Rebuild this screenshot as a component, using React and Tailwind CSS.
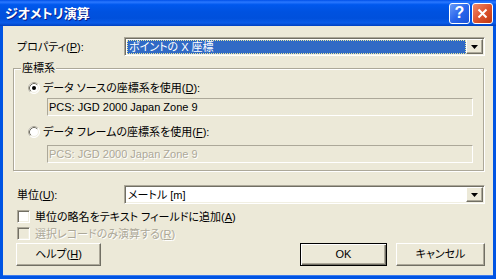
import React from "react";

const sunken =
  "border border-t-[#aca899] border-l-[#aca899] border-r-white border-b-white shadow-[inset_1px_1px_0_#716f64,inset_-1px_-1px_0_#f1efe2]";
const raised =
  "bg-[#ece9d8] border border-t-white border-l-white border-r-[#716f64] border-b-[#716f64] shadow-[inset_-1px_-1px_0_#aca899]";

function Arrow() {
  return (
    <div className={`w-[17px] h-full shrink-0 flex items-center justify-center ${raised}`}>
      <svg width="7" height="4" viewBox="0 0 7 4">
        <path d="M0 0H7L3.5 4Z" fill="#000" />
      </svg>
    </div>
  );
}

function Radio({ checked }) {
  return (
    <svg width="12" height="12" viewBox="0 0 12 12" className="shrink-0">
      <circle cx="6" cy="6" r="5.5" fill="#fff" stroke="#fff" />
      <path d="M2.11 9.89A5.5 5.5 0 0 1 9.89 2.11" fill="none" stroke="#aca899" />
      <circle cx="6" cy="6" r="4.5" fill="#fff" stroke="#f1efe2" />
      <path d="M2.82 9.18A4.5 4.5 0 0 1 9.18 2.82" fill="none" stroke="#716f64" />
      {checked && <circle cx="6" cy="6" r="2" fill="#000" />}
    </svg>
  );
}

function Check({ disabled }) {
  return (
    <div
      className={`w-[13px] h-[13px] shrink-0 ${sunken} ${disabled ? "bg-[#ece9d8]" : "bg-white"}`}
    />
  );
}

const dis = "text-[#aca899] [text-shadow:1px_1px_0_#fff]";

export default function App() {
  return (
    <div className="w-[496px] h-[279px] flex flex-col bg-[#0054e3] overflow-hidden font-['Liberation_Sans','Noto_Sans_CJK_JP',sans-serif] text-[11px] text-black [font-feature-settings:'palt']">
      {/* Title bar */}
      <div className="h-[26px] shrink-0 flex items-center pl-[5px] pr-[3px] bg-[linear-gradient(180deg,#0050e8_0%,#2a78ff_8%,#0058ee_18%,#0052e0_45%,#0050dc_70%,#0a5ce8_88%,#0040c0_100%)]">
        <span className="flex-1 font-bold text-[13px] leading-none text-white [text-shadow:1px_1px_0_#0a1e8a]">
          ジオメトリ演算
        </span>
        <div className="flex gap-[2px]">
          <div className="w-[21px] h-[21px] rounded-[3px] border border-white bg-[linear-gradient(135deg,#6a9cf8_0%,#2a66ec_50%,#1a52d8_100%)] flex items-center justify-center text-white font-bold text-[16px] leading-none font-['Liberation_Sans',sans-serif]">
            ?
          </div>
          <div className="w-[21px] h-[21px] rounded-[3px] border border-white bg-[linear-gradient(135deg,#f0896a_0%,#dd5530_50%,#c03810_100%)] flex items-center justify-center">
            <svg width="11" height="11" viewBox="0 0 11 11">
              <path d="M1.5 1.5L9.5 9.5M9.5 1.5L1.5 9.5" stroke="#fff" strokeWidth="2" />
            </svg>
          </div>
        </div>
      </div>

      {/* Body */}
      <div className="flex-1 mx-[3px] mb-[3px] bg-[#ece9d8] flex flex-col pt-[11px] border-b border-[#3d7bef]">
        {/* Property row */}
        <div className="flex items-center h-[19px] ml-[14px]">
          <span className="w-[107px] leading-[14px]">
            プロパティ(<u className="underline-offset-1">P</u>):
          </span>
          <div className={`w-[361px] h-[19px] flex p-[1px] ${sunken} bg-white`}>
            <div className="flex-1 pt-[1px] pl-[1px] bg-white">
              <div className="h-full bg-[#316ac5] border border-dotted border-[#e8e8a0] text-white flex items-center leading-[12px] pl-[1px]">
                ポイントの X 座標
              </div>
            </div>
            <Arrow />
          </div>
        </div>

        {/* Group box */}
        <div className="relative mt-[12px] ml-[10px] w-[471px] h-[103px] border border-[#aca899] shadow-[inset_1px_1px_0_#fff,1px_1px_0_#fff] pt-[12px]">
          <span className="absolute left-[7px] top-[-8px] px-[1px] bg-[#ece9d8] leading-[14px]">
            座標系
          </span>
          <div className="flex items-center h-[14px] ml-[14px] gap-[3px]">
            <Radio checked />
            <span className="leading-[14px]">
              データ ソースの座標系を使用(<u className="underline-offset-1">D</u>):
            </span>
          </div>
          <div className="mt-[3px] ml-[33px] w-[426px] h-[18px] border border-t-[#aca899] border-l-[#aca899] border-r-white border-b-white flex items-center pl-[1px] leading-[14px]">
            PCS: JGD 2000 Japan Zone 9
          </div>
          <div className="flex items-center h-[14px] mt-[9px] ml-[14px] gap-[3px]">
            <Radio />
            <span className="leading-[14px]">
              データ フレームの座標系を使用(<u className="underline-offset-1">F</u>):
            </span>
          </div>
          <div className={`mt-[6px] ml-[33px] w-[426px] h-[18px] border border-t-[#aca899] border-l-[#aca899] border-r-white border-b-white flex items-center pl-[1px] leading-[14px] ${dis}`}>
            PCS: JGD 2000 Japan Zone 9
          </div>
        </div>

        {/* Unit row */}
        <div className="flex items-center h-[19px] mt-[14px] ml-[14px]">
          <span className="w-[107px] leading-[14px]">
            単位(<u className="underline-offset-1">U</u>):
          </span>
          <div className={`w-[361px] h-[19px] flex p-[1px] ${sunken} bg-white`}>
            <div className="flex-1 bg-white flex items-center leading-[14px] pl-[2px]">メートル [m]</div>
            <Arrow />
          </div>
        </div>

        {/* Checkboxes */}
        <div className="flex items-center h-[13px] mt-[6px] ml-[14px] gap-[5px]">
          <Check />
          <span className="leading-[14px]">
            単位の略名をテキスト フィールドに追加(<u className="underline-offset-1">A</u>)
          </span>
        </div>
        <div className="flex items-center h-[13px] mt-[4px] ml-[14px] gap-[5px]">
          <Check disabled />
          <span className={`leading-[14px] ${dis}`}>
            選択レコードのみ演算する(<u className="underline-offset-1">R</u>)
          </span>
        </div>

        {/* Buttons */}
        <div className="flex h-[23px] mt-[3px] ml-[13px] w-[469px]">
          <div className={`w-[85px] h-full flex items-center justify-center ${raised}`}>
            ヘルプ(<u className="underline-offset-1">H</u>)
          </div>
          <div className="ml-auto w-[87px] h-full border border-black bg-[#ece9d8] shadow-[inset_1px_1px_0_#fff,inset_-1px_-1px_0_#716f64,inset_-2px_-2px_0_#aca899] flex items-center justify-center">
            OK
          </div>
          <div className={`ml-[9px] w-[89px] h-full flex items-center justify-center ${raised}`}>
            キャンセル
          </div>
        </div>
      </div>
    </div>
  );
}
